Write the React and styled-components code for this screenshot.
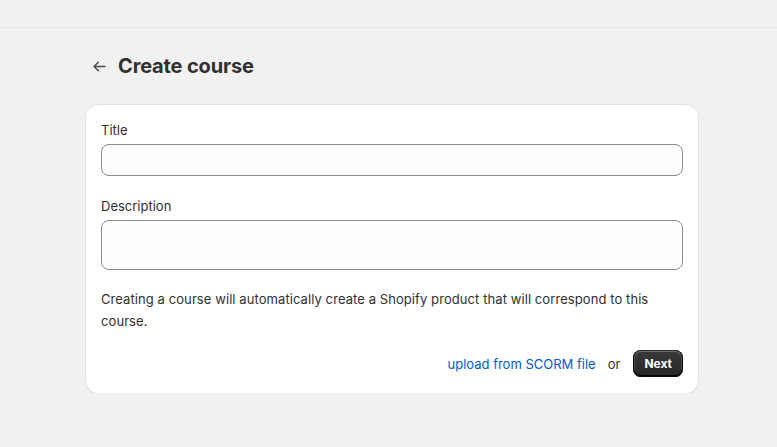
import React from "react";
import styled, { createGlobalStyle } from "styled-components";

const GlobalStyle = createGlobalStyle`
  html, body {
    margin: 0;
    padding: 0;
    background: #f1f1f1;
    font-family: Inter, "Noto Sans", sans-serif;
    color: #303030;
  }
`;

const TopBar = styled.div`
  height: 27px;
  border-bottom: 1px solid #e6e6e6;
`;

const Page = styled.div`
  width: 612px;
  margin: 0 79px 0 86px;
`;

const Header = styled.div`
  display: flex;
  align-items: center;
  gap: 9px;
  padding: 24px 0 0 3px;
  height: 28px;
`;

const BackButton = styled.button`
  display: flex;
  align-items: center;
  justify-content: center;
  width: 20px;
  height: 20px;
  padding: 0;
  border: none;
  background: none;
  color: #4a4a4a;
  cursor: pointer;
`;

const Title = styled.h1`
  margin: 0;
  font-size: 20px;
  line-height: 28px;
  font-weight: 700;
  color: #303030;
  letter-spacing: -0.15px;
`;

const Card = styled.div`
  margin-top: 25px;
  background: #fff;
  border-radius: 12px;
  box-shadow: 0 1px 0 rgba(26, 26, 26, 0.07), 0 0 0 1px rgba(0, 0, 0, 0.06);
  padding: 15px 15px 16px;
`;

const Field = styled.div`
  display: flex;
  flex-direction: column;
  gap: 4px;
  margin-bottom: ${(p) => p.$gap || 0}px;
`;

const Label = styled.label`
  font-size: 13px;
  line-height: 20px;
  color: #303030;
`;

const Input = styled.input`
  box-sizing: border-box;
  height: 32px;
  border: 1px solid #8a8a8a;
  border-radius: 8px;
  background: #fdfdfd;
  font: inherit;
  padding: 0 12px;
`;

const TextArea = styled.textarea`
  box-sizing: border-box;
  height: 50px;
  border: 1px solid #8a8a8a;
  border-radius: 8px;
  background: #fdfdfd;
  font: inherit;
  padding: 6px 12px;
  resize: none;
`;

const Help = styled.p`
  margin: 18px 0 0;
  font-size: 13px;
  line-height: 22px;
  letter-spacing: 0.08px;
  color: #303030;
`;

const Footer = styled.div`
  display: flex;
  justify-content: flex-end;
  align-items: center;
  gap: 12px;
  margin-top: 18px;
`;

const Link = styled.a`
  font-size: 13px;
  color: #005bd3;
  text-decoration: none;
  cursor: pointer;
`;

const Or = styled.span`
  font-size: 13px;
  color: #303030;
  margin-right: 1px;
`;

const NextButton = styled.button`
  height: 27px;
  padding: 0 11px;
  border: none;
  border-radius: 8px;
  background: linear-gradient(180deg, #3a3a3a 0%, #262626 100%);
  box-shadow: 0 -1px 0 1px rgba(0, 0, 0, 0.8) inset, 0 0 0 1px #303030 inset,
    0 0.5px 0 1.5px rgba(255, 255, 255, 0.25) inset;
  color: #fff;
  font: inherit;
  font-size: 12px;
  font-weight: 650;
  cursor: pointer;
`;

function App() {
  return (
    <>
      <GlobalStyle />
      <TopBar />
      <Page>
        <Header>
          <BackButton aria-label="Back">
            <svg width="19" height="19" viewBox="0 0 20 20" fill="currentColor">
              <path d="M16.5 10a.75.75 0 0 1-.75.75H6.06l3.22 3.22a.75.75 0 1 1-1.06 1.06l-4.5-4.5a.75.75 0 0 1 0-1.06l4.5-4.5a.75.75 0 0 1 1.06 1.06L6.06 9.25h9.69a.75.75 0 0 1 .75.75Z" />
            </svg>
          </BackButton>
          <Title>Create course</Title>
        </Header>
        <Card>
          <Field $gap={20}>
            <Label>Title</Label>
            <Input />
          </Field>
          <Field>
            <Label>Description</Label>
            <TextArea />
          </Field>
          <Help>
            Creating a course will automatically create a Shopify product that will correspond to this
            course.
          </Help>
          <Footer>
            <Link>upload from SCORM file</Link>
            <Or>or</Or>
            <NextButton>Next</NextButton>
          </Footer>
        </Card>
      </Page>
    </>
  );
}

export default App;
